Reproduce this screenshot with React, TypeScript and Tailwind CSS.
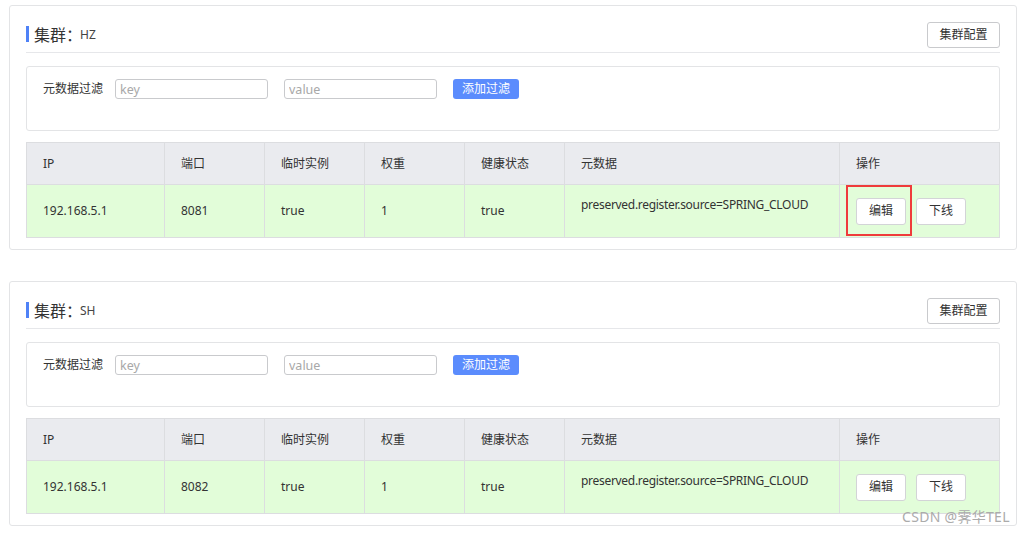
import { Fragment } from "react";

const columns = ["IP", "端口", "临时实例", "权重", "健康状态", "元数据", "操作"];

const clusters = [
  { name: "HZ", ip: "192.168.5.1", port: "8081", highlight: true },
  { name: "SH", ip: "192.168.5.1", port: "8082", highlight: false },
];

const font = "font-['Noto_Sans','Noto_Sans_CJK_SC',sans-serif]";

function ClusterCard({ name, ip, port, highlight }: (typeof clusters)[number]) {
  const cells = [ip, port, "true", "1", "true"];

  return (
    <section className="w-[1008px] rounded-[3px] border border-[#e3e4e6] bg-white px-4 pt-4 pb-[11px]">
      <div className="flex h-[31px] items-start justify-between border-b border-[#e6e7ea]">
        <div className="mt-[3px] flex items-center">
          <span className="h-4 w-[3px] bg-[#4f82f7]" />
          <span className="ml-[5px] pt-[2px] text-[16px] leading-4 text-[#333]">集群：</span>
          <span className="-ml-[2px] pt-[2px] text-[12px] leading-4 text-[#444]">{name}</span>
        </div>
        <button className="h-[26px] w-[73px] rounded-[3px] border border-[#c9cacd] bg-white text-[12px] text-[#333]">
          集群配置
        </button>
      </div>

      <div className="mt-[13px] h-[65px] rounded-[3px] border border-[#e3e4e6] px-4 pt-3">
        <div className="flex items-center">
          <span className="text-[12px] text-[#333]">元数据过滤</span>
          <input
            placeholder="key"
            className="ml-[12px] h-5 w-[153px] rounded-[3px] border border-[#c9cacd] px-[4px] text-[12.5px] outline-none placeholder:text-[#a8a8a8]"
          />
          <input
            placeholder="value"
            className="ml-4 h-5 w-[153px] rounded-[3px] border border-[#c9cacd] px-[4px] text-[12.5px] outline-none placeholder:text-[#a8a8a8]"
          />
          <button className="ml-4 h-5 w-[66px] rounded-[3px] bg-[#5b8cfd] text-[12px] text-white">
            添加过滤
          </button>
        </div>
      </div>

      <div className="mt-[11px] grid grid-cols-[137px_100px_100px_100px_100px_275px_160px] border border-[#dcdde0] text-[12px] text-[#333]">
        {columns.map((label, i) => (
          <div
            key={label}
            className={`flex h-[41px] items-center bg-[#eaebef] pt-[1px] pl-4 ${i > 0 ? "border-l border-[#dcdde0]" : ""}`}
          >
            {label}
          </div>
        ))}
        {cells.map((v, i) => (
          <div
            key={i}
            className={`flex h-[53px] items-center border-t border-[#dcdde0] bg-[#e2fdd9] pl-4 ${i > 0 ? "border-l" : ""}`}
          >
            {v}
          </div>
        ))}
        <div className="h-[53px] border-t border-l border-[#dcdde0] bg-[#e2fdd9] pt-[11px] pl-4 tracking-[-0.3px]">
          preserved.register.source=SPRING_CLOUD
        </div>
        <div className="relative flex h-[53px] items-center gap-[10px] border-t border-l border-[#dcdde0] bg-[#e2fdd9] pl-4">
          <button className="h-[27px] w-[50px] rounded-[3px] border border-[#d3d4d7] bg-white text-[12px] text-[#333]">
            编辑
          </button>
          <button className="h-[27px] w-[50px] rounded-[3px] border border-[#d3d4d7] bg-white text-[12px] text-[#333]">
            下线
          </button>
          {highlight && (
            <span className="absolute top-0 left-[6px] h-[51px] w-[66px] border-2 border-[#ef3b3b]" />
          )}
        </div>
      </div>
    </section>
  );
}

export default function App() {
  return (
    <div className={`relative h-[533px] w-[1026px] overflow-hidden bg-white pt-[5px] pl-[9px] ${font}`}>
      {clusters.map((c, i) => (
        <Fragment key={c.name}>
          {i > 0 && <div className="h-[31px]" />}
          <ClusterCard {...c} />
        </Fragment>
      ))}
      <span className="absolute top-[506px] left-[902px] text-[14px] tracking-[0.3px] text-[#ababab]">CSDN @霁华TEL</span>
    </div>
  );
}
